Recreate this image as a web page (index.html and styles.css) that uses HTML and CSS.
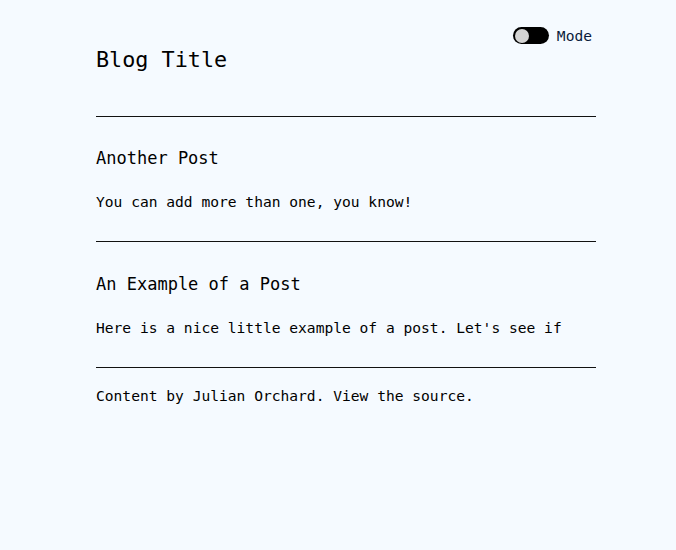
FILE: index.html
```html
<!DOCTYPE html>
<html lang="en">
<head>
<meta charset="utf-8">
<title>Blog Title</title>
<link rel="stylesheet" href="styles.css">
</head>
<body>
<div class="page">
  <header class="site-header">
    <div class="mode-row">
      <span class="toggle"><span class="knob"></span></span>
      <span class="mode-label">Mode</span>
    </div>
    <h1 class="site-title">Blog Title</h1>
  </header>
  <hr class="rule rule-top">
  <article class="post">
    <h3 class="post-title">Another Post</h3>
    <p class="post-body">You can add more than one, you know!</p>
  </article>
  <hr class="rule">
  <article class="post post-last">
    <h3 class="post-title">An Example of a Post</h3>
    <p class="post-body">Here is a nice little example of a post. Let's see if</p>
  </article>
  <hr class="rule">
  <footer class="site-footer">Content by Julian Orchard. View the source.</footer>
</div>
</body>
</html>
```
FILE: styles.css
```css
html, body {
  margin: 0;
  padding: 0;
  background: #f5faff;
}
body {
  font-family: "DejaVu Sans Mono", "Liberation Mono", monospace;
  color: #000;
  font-size: 14.6px;
}
.page {
  width: 500px;
  margin-left: 96px;
  padding-top: 27px;
}
.site-header {
  display: flex;
  flex-direction: column;
}
.mode-row {
  display: flex;
  align-items: center;
  justify-content: flex-end;
  gap: 8px;
  height: 17px;
  padding-right: 4px;
}
.toggle {
  display: flex;
  align-items: center;
  width: 36px;
  height: 17px;
  border-radius: 9px;
  background: #000;
  padding-left: 2px;
  box-sizing: border-box;
}
.knob {
  width: 14px;
  height: 14px;
  border-radius: 50%;
  background: #d4d4d4;
}
.mode-label {
  font-size: 14.6px;
  line-height: 17px;
  color: #0a1a3a;
}
.site-title {
  margin: 3px 0 0;
  font-size: 21.8px;
  line-height: 26px;
  font-weight: normal;
}
.rule {
  margin: 0;
  border: 0;
  height: 1px;
  background: #111;
}
.rule-top {
  margin-top: 43px;
}
.post {
  padding-top: 31px;
  padding-bottom: 30px;
}
.post-last {
  padding-top: 32px;
}
.post-title {
  margin: 0;
  font-size: 17px;
  line-height: 20px;
  font-weight: normal;
}
.post-body {
  margin: 25px 0 0;
  line-height: 18px;
}
.site-footer {
  padding-top: 19px;
  line-height: 18px;
}
```
